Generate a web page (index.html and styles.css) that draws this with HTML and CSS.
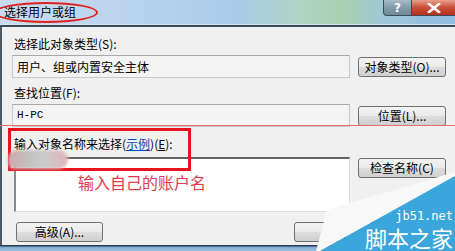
FILE: index.html
```html
<!DOCTYPE html>
<html>
<head>
<meta charset="utf-8">
<link rel="stylesheet" href="styles.css">
</head>
<body>
<div class="window">
  <div class="titlebar">
    <span class="title">选择用户或组</span>
    <div class="caption-btns">
      <div class="cap help">?</div>
      <div class="cap close">
        <svg width="14" height="10" viewBox="0 0 14 10"><path d="M2 1 L12 9 M12 1 L2 9" stroke="#fff" stroke-width="2.6" stroke-linecap="square"/></svg>
      </div>
    </div>
  </div>
  <div class="client">
    <div class="label first">选择此对象类型(S):</div>
    <div class="row">
      <div class="field">用户、组或内置安全主体</div>
      <button class="btn side">对象类型(O)...</button>
    </div>
    <div class="label">查找位置(F):</div>
    <div class="row">
      <div class="field mono">H-PC</div>
      <button class="btn side">位置(L)...</button>
    </div>
    <div class="label third">输入对象名称来选择(<span class="link">示例</span>)(<span class="ul">E</span>):</div>
    <div class="row top">
      <div class="textarea"></div>
      <button class="btn side">检查名称(C)</button>
    </div>
    <div class="row bottom">
      <button class="btn adv">高级(A)...</button>
      <button class="btn ok">确定</button>
    </div>
  </div>
  <div class="frame-bottom"></div>

  <div class="ann ellipse"></div>
  <div class="ann redline"></div>
  <div class="ann redbox"></div>
  <div class="ann blur"></div>
  <div class="ann note">输入自己的账户名</div>
  <svg class="ann watermark" width="160" height="100" viewBox="295 151 160 100">
    <polygon points="316,251 327,210 455,172 455,176 320,251" fill="#f8f8f8"/>
    <polygon points="455,176 455,251 320,251" fill="#3aa6dc"/>
    <text x="453" y="220" text-anchor="end" class="wm1">jb51.net</text>
    <text x="453" y="247" text-anchor="end" class="wm2">脚本之家</text>
  </svg>
</div>
</body>
</html>
```
FILE: styles.css
```css
* { box-sizing: border-box; }
html, body { margin: 0; padding: 0; }
body {
  width: 455px;
  height: 251px;
  overflow: hidden;
  font-family: "Noto Sans CJK SC", "Liberation Sans", sans-serif;
  font-size: 12px;
  color: #000;
  background: #f0f0f0;
}
.window {
  position: relative;
  width: 455px;
  height: 251px;
  display: flex;
  flex-direction: column;
}
.titlebar {
  height: 27px;
  flex: none;
  display: flex;
  align-items: flex-start;
  background: linear-gradient(90deg, #c9dcef 0%, #b9d3ec 30%, #a9cbea 52%, #b0d4c4 66%, #a8d0b0 76%, #9fc7d8 84%, #8fbde2 100%);
  border-bottom: 2px solid #3b4e60;
  box-shadow: inset 0 -1px 0 #d8e4ee;
}
.title {
  padding: 4px 0 0 4px;
  font-size: 12px;
  line-height: 16px;
  color: #000;
}
.caption-btns {
  margin-left: auto;
  display: flex;
  height: 16px;
}
.cap {
  height: 16px;
  border: 1px solid #3c4a58;
  border-top: none;
  display: flex;
  align-items: center;
  justify-content: center;
}
.help {
  width: 28px;
  border-radius: 0 0 0 4px;
  background: linear-gradient(#a9bcc8, #7f97a6 55%, #6f8a98);
  color: #fff;
  font-family: "DejaVu Sans", sans-serif;
  font-weight: bold;
  font-size: 12px;
  border-right: none;
}
.close {
  width: 44px;
  background: linear-gradient(#e8a08e, #c8503a 50%, #b8301c);
  border-right: none;
}
.client {
  flex: 1;
  display: flex;
  flex-direction: column;
  padding: 0 9px 0 12px;
  border-left: 2px solid #4d5a66;
  background: #f0f0f0;
}
.label {
  height: 12px;
  line-height: 12px;
  margin-top: 9px;
  margin-bottom: 5px;
  white-space: nowrap;
}
.label.first { margin-top: 11px; }
.label.third { margin-top: 11px; margin-bottom: 7px; }
.row {
  display: flex;
  align-items: center;
  gap: 8px;
}
.row.top { align-items: flex-start; }
.field {
  width: 338px;
  height: 23px;
  margin-left: -2px;
  border: 1px solid #c8c8c8;
  border-top-color: #a8a8a8;
  background: #f4f4f4;
  padding-left: 4px;
  line-height: 21px;
  font-size: 12px;
}
.field.mono { font-family: "Liberation Mono", monospace; font-size: 11px; }
.btn {
  font-family: "Noto Sans CJK SC", "Liberation Sans", sans-serif;
  font-size: 12px;
  height: 20px;
  padding: 0;
  border: 1px solid #707070;
  border-radius: 3px;
  background: linear-gradient(#f3f3f3 0%, #ebebeb 48%, #dddddd 52%, #cfcfcf 100%);
  color: #000;
  line-height: 18px;
  white-space: nowrap;
}
.side { width: 88px; }
.textarea {
  width: 336px;
  height: 55px;
  background: #fff;
  border: 1px solid #dcdcdc;
  border-top: 2px solid #646464;
  border-left: 2px solid #8a8a8a;
}
.row.top .btn { margin-top: 1px; }
.row.bottom {
  margin-top: 10px;
  padding-left: 2px;
  justify-content: flex-start;
}
.adv { width: 87px; }
.ok { width: 88px; margin-left: 183px; }
.link { color: #0645ad; text-decoration: underline; }
.ul { text-decoration: underline; }
.frame-bottom {
  height: 6px;
  flex: none;
  background: linear-gradient(#2c3c4c 0px, #2c3c4c 1px, #7aa8cf 2px, #9cc4e4 6px);
}
.ann { position: absolute; pointer-events: none; }
.ellipse {
  left: -6px;
  top: 2px;
  width: 104px;
  height: 21px;
  border: 2px solid #e02020;
  border-radius: 50%;
}
.redline {
  left: 0;
  top: 125px;
  width: 455px;
  height: 1px;
  background: #e07070;
}
.redbox {
  left: 8px;
  top: 128px;
  width: 183px;
  height: 43px;
  border: 3px solid #e8141c;
}
.blur {
  left: 8px;
  top: 150px;
  width: 60px;
  height: 19px;
  border-radius: 9px 10px 10px 6px;
  background: linear-gradient(90deg, #cfa8ae 0%, #c2c2c2 35%, #cacaca 60%, #e4b4ba 100%);
  filter: blur(1.5px);
}
.note {
  left: 78px;
  top: 173px;
  font-size: 16px;
  line-height: 18px;
  color: #e23a48;
  white-space: nowrap;
}
.watermark { left: 295px; top: 151px; }
.wm1 { fill: #fff; font-family: "DejaVu Sans Mono", monospace; font-size: 12px; }
.wm2 { fill: #fff; font-family: "Noto Sans CJK SC", sans-serif; font-size: 22px; }
```
